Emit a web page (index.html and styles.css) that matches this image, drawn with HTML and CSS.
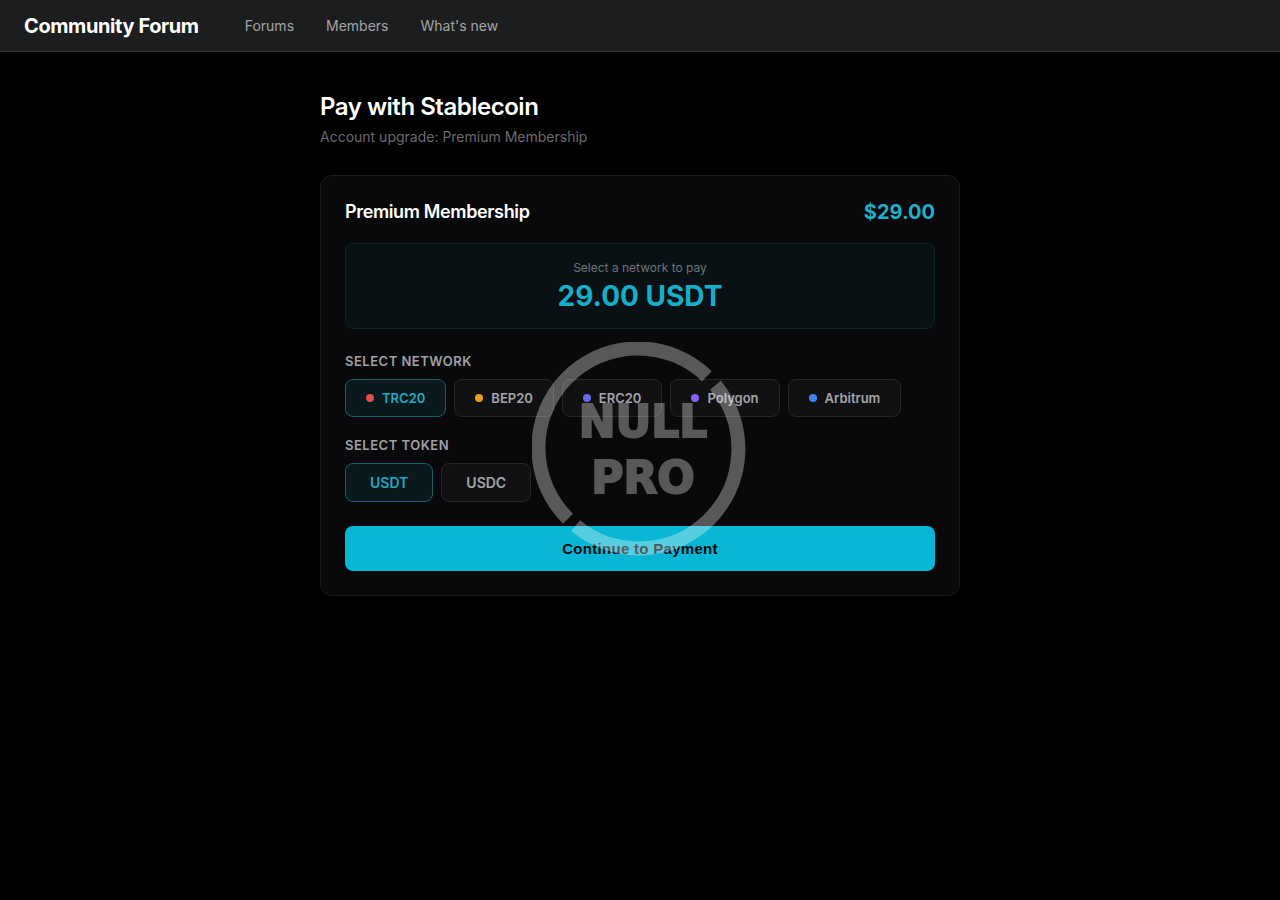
FILE: index.html
```html
<!DOCTYPE html>
<html lang="en">
<head>
  <meta charset="UTF-8">
  <meta name="viewport" content="width=device-width, initial-scale=1.0">
  <title>Pay with Stablecoin - Community Forum</title>
  <link rel="stylesheet" href="styles.css">
</head>
<body>

  <!-- Top navigation -->
  <header class="navbar">
    <a class="brand" href="#">Community Forum</a>
    <nav class="nav-links">
      <a href="#">Forums</a>
      <a href="#">Members</a>
      <a href="#">What's new</a>
    </nav>
  </header>

  <main class="page">
    <h1 class="page-title">Pay with Stablecoin</h1>
    <p class="page-subtitle">Account upgrade: Premium Membership</p>

    <!-- Payment card -->
    <section class="card">
      <div class="card-header">
        <h2 class="plan-name">Premium Membership</h2>
        <span class="plan-price">$29.00</span>
      </div>

      <div class="amount-box">
        <div class="amount-label">Select a network to pay</div>
        <div class="amount-value">29.00 USDT</div>
      </div>

      <!-- Networks -->
      <h3 class="group-label" id="network-label">Select Network</h3>
      <div class="networks" role="group" aria-labelledby="network-label">
        <button type="button" class="option active" aria-pressed="true"><span class="dot trc"></span>TRC20</button>
        <button type="button" class="option" aria-pressed="false"><span class="dot bep"></span>BEP20</button>
        <button type="button" class="option" aria-pressed="false"><span class="dot erc"></span>ERC20</button>
        <button type="button" class="option" aria-pressed="false"><span class="dot polygon"></span>Polygon</button>
        <button type="button" class="option" aria-pressed="false"><span class="dot arbitrum"></span>Arbitrum</button>
      </div>

      <!-- Tokens -->
      <h3 class="group-label" id="token-label">Select Token</h3>
      <div class="tokens" role="group" aria-labelledby="token-label">
        <button type="button" class="option token active" aria-pressed="true">USDT</button>
        <button type="button" class="option token" aria-pressed="false">USDC</button>
      </div>

      <button type="button" class="pay-btn">Continue to Payment</button>
    </section>
  </main>

  <!-- Watermark -->
  <div class="watermark">
    <svg width="214" height="214" viewBox="0 0 214 214">
      <path class="ring" d="M174.9 34.2A99.5 99.5 0 0 0 36 176.7M43.6 183.7A99.5 99.5 0 0 0 183.4 43.3"/>
      <text x="111" y="95">NULL</text>
      <text x="111" y="151">PRO</text>
    </svg>
  </div>

</body>
</html>
```

FILE: styles.css
```css
/* General Reset */
* {
  margin: 0;
  padding: 0;
  box-sizing: border-box;
}

body {
  background: #000;
  color: #fff;
  font-family: Inter, 'Liberation Sans', sans-serif;
  min-height: 100vh;
}

a {
  text-decoration: none;
}

/* Navigation */
.navbar {
  display: flex;
  align-items: center;
  gap: 46px;
  min-height: 52px;
  padding: 0 24px;
  background: #1c1d1f;
  border-bottom: 1px solid #343536;
}

.brand {
  color: #fff;
  font-size: 20px;
  font-weight: 700;
  letter-spacing: -0.02em;
}

.nav-links {
  display: flex;
  gap: 32px;
}

.nav-links a {
  color: #a5a5a6;
  font-size: 14px;
}

/* Page */
.page {
  max-width: 640px;
  margin: 0 auto;
  padding: 40px 0;
}

.page-title {
  font-size: 24px;
  font-weight: 600;
  line-height: 30px;
  letter-spacing: -0.02em;
}

.page-subtitle {
  margin: 4px 0 27px;
  color: #6a6a6c;
  font-size: 14px;
  line-height: 22px;
}

/* Card */
.card {
  padding: 24px;
  background: #09090b;
  border: 1px solid #1b1b1d;
  border-radius: 12px;
}

.card-header {
  display: flex;
  justify-content: space-between;
  align-items: center;
  margin-bottom: 19px;
  line-height: 24px;
}

.plan-name {
  font-size: 18px;
  font-weight: 600;
  letter-spacing: -0.02em;
}

.plan-price {
  color: #22aec8;
  font-size: 20px;
  font-weight: 700;
}

.amount-box {
  margin-bottom: 24px;
  padding: 16px;
  background: #091115;
  border: 1px solid #0b272c;
  border-radius: 8px;
  text-align: center;
}

.amount-label {
  margin-bottom: 4px;
  color: #6f7476;
  font-size: 12px;
  line-height: 16px;
}

.amount-value {
  color: #16afca;
  font-size: 28px;
  font-weight: 700;
  line-height: 32px;
}

/* Options */
.group-label {
  margin-bottom: 10px;
  color: #a0a0a5;
  font-size: 13px;
  font-weight: 600;
  line-height: 16px;
  letter-spacing: 0.5px;
  text-transform: uppercase;
}

.networks,
.tokens {
  display: flex;
  flex-wrap: wrap;
  gap: 8px;
}

.networks {
  margin-bottom: 20px;
}

.tokens {
  margin-bottom: 24px;
}

.option {
  display: flex;
  align-items: center;
  gap: 8px;
  padding: 10px 20px;
  background: #111114;
  border: 1px solid #27272a;
  border-radius: 8px;
  color: #a5a5aa;
  font-family: inherit;
  font-size: 13px;
  font-weight: 600;
  line-height: 16px;
  cursor: pointer;
}

.option.token {
  padding: 10px 24px;
  font-size: 14px;
  line-height: 17px;
}

.option.active {
  background: #09191e;
  border-color: #13606d;
  color: #22a9c0;
}

.dot {
  width: 8px;
  height: 8px;
  border-radius: 50%;
}

.trc { background: #e34d4d; }
.bep { background: #ec9f1c; }
.erc { background: #686aeb; }
.polygon { background: #8860eb; }
.arbitrum { background: #4284ed; }

.pay-btn {
  width: 100%;
  padding: 14px;
  background: #08b6d5;
  border: none;
  border-radius: 8px;
  color: #05090b;
  font-family: 'Liberation Sans', Arial, sans-serif;
  font-size: 15px;
  font-weight: 700;
  line-height: 17px;
  letter-spacing: 0.02em;
  cursor: pointer;
}

/* Watermark over the page */
.watermark {
  position: fixed;
  inset: 0;
  display: grid;
  place-items: center;
  padding: 0 3px 3px 0;
  opacity: 0.32;
  pointer-events: none;
}

.watermark .ring {
  fill: none;
  stroke: #fff;
  stroke-width: 14;
}

.watermark text {
  fill: #fff;
  stroke: #fff;
  stroke-width: 2;
  font-family: 'DejaVu Sans', sans-serif;
  font-size: 44px;
  font-weight: 700;
  text-anchor: middle;
}
```
